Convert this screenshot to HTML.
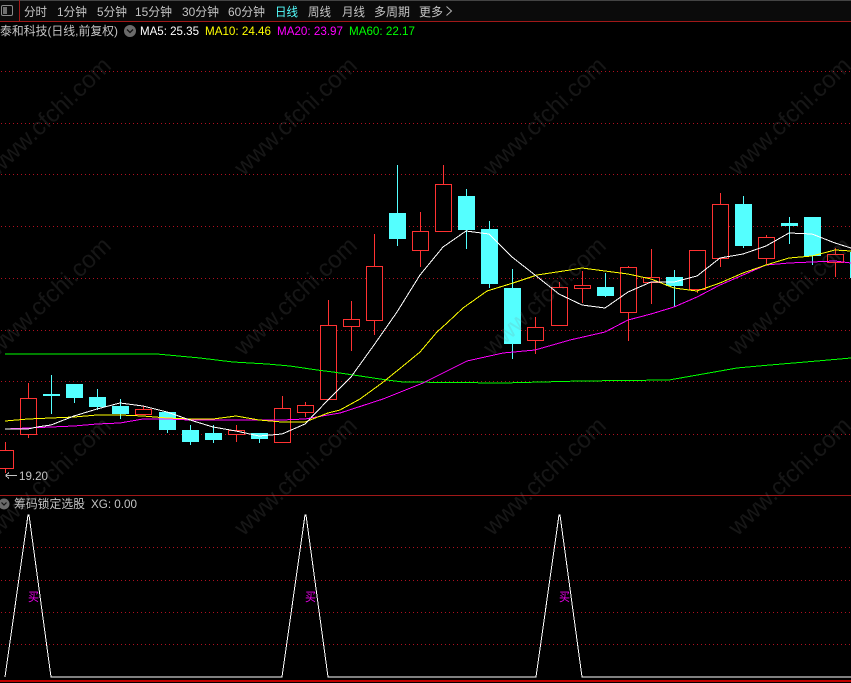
<!DOCTYPE html>
<html lang="zh">
<head>
<meta charset="utf-8">
<title>泰和科技</title>
<style>
html,body{margin:0;padding:0;background:#000;width:851px;height:683px;overflow:hidden}
svg{display:block;position:absolute;left:0;top:0}
text{font-family:"Liberation Sans","Noto Sans CJK SC",sans-serif;font-size:12px}
</style>
</head>
<body>
<svg width="851" height="683" viewBox="0 0 851 683" xmlns="http://www.w3.org/2000/svg">
<rect width="851" height="683" fill="#000"/>

<!-- toolbar -->
<rect x="0" y="0" width="851" height="21" fill="#0b0b0b"/>
<rect x="0" y="0" width="851" height="1" fill="#444"/>
<rect x="0" y="21" width="851" height="1" fill="#a01818"/>
<rect x="19" y="0" width="1" height="21" fill="#a01818"/>
<rect x="1.5" y="5.5" width="11" height="10" rx="1.5" fill="none" stroke="#8a8a8a"/>
<rect x="3" y="7" width="4" height="7" fill="#6e6e6e"/>
<g fill="#c4c4c4">
<text x="24" y="16" textLength="23" lengthAdjust="spacingAndGlyphs">分时</text>
<text x="57" y="16" textLength="30" lengthAdjust="spacingAndGlyphs">1分钟</text>
<text x="97" y="16" textLength="30" lengthAdjust="spacingAndGlyphs">5分钟</text>
<text x="135" y="16" textLength="37" lengthAdjust="spacingAndGlyphs">15分钟</text>
<text x="182" y="16" textLength="37" lengthAdjust="spacingAndGlyphs">30分钟</text>
<text x="228" y="16" textLength="37" lengthAdjust="spacingAndGlyphs">60分钟</text>
<text x="275" y="16" textLength="23" lengthAdjust="spacingAndGlyphs" fill="#54ffff">日线</text>
<text x="308" y="16" textLength="23" lengthAdjust="spacingAndGlyphs">周线</text>
<text x="342" y="16" textLength="23" lengthAdjust="spacingAndGlyphs">月线</text>
<text x="374" y="16" textLength="36" lengthAdjust="spacingAndGlyphs">多周期</text>
<text x="419" y="16" textLength="24" lengthAdjust="spacingAndGlyphs">更多</text>
</g>
<path d="M446.5 6.5L451.5 11L446.5 15.5" fill="none" stroke="#b4b4b4"/>

<!-- info row -->
<text x="0" y="35" textLength="118" lengthAdjust="spacingAndGlyphs" fill="#c4c4c4">泰和科技(日线,前复权)</text>
<circle cx="130" cy="31" r="6" fill="#6a6a6a"/>
<path d="M127 29.5L130 32.5L133 29.5" fill="none" stroke="#111" stroke-width="1.3"/>
<text x="140" y="35" textLength="59" lengthAdjust="spacingAndGlyphs" fill="#fff">MA5: 25.35</text>
<text x="205" y="35" textLength="66" lengthAdjust="spacingAndGlyphs" fill="#ff0">MA10: 24.46</text>
<text x="277" y="35" textLength="66" lengthAdjust="spacingAndGlyphs" fill="#f0f">MA20: 23.97</text>
<text x="349" y="35" textLength="66" lengthAdjust="spacingAndGlyphs" fill="#0f0">MA60: 22.17</text>

<!-- grid -->
<path d="M1 71.5H851M1 123.5H851M1 174.5H851M1 226.5H851M1 278.5H851M1 330.5H851M1 381.5H851M1 434.5H851M1 547.5H851M1 580.5H851M1 612.5H851M1 644.5H851" stroke="#b01020" stroke-dasharray="1 3" fill="none" shape-rendering="crispEdges"/>

<!-- red candles -->
<g shape-rendering="crispEdges">
<path stroke="#ff3232" fill="none" d="M5.5 442V473M28.5 383V438M143.5 406V415M236.5 425V442M282.5 396V442M305.5 402V417M328.5 300V399M351.5 301V351M374.5 234V335M420.5 212V267M443.5 165V231M535.5 317V354M559.5 282V325M582.5 271V303M628.5 266V341M651.5 249V304M697.5 250V293M720.5 193V267M766.5 235V264M835.5 248V277"/>
<path fill="#ff3232" d="M-3 450h17v19h-17zM20 398h17v37h-17zM135 409h17v6h-17zM228 430h17v5h-17zM274 408h17v35h-17zM297 405h17v8h-17zM320 325h17v75h-17zM343 319h17v8h-17zM366 266h17v55h-17zM412 231h17v20h-17zM435 184h17v48h-17zM527 327h17v14h-17zM551 287h17v39h-17zM574 285h17v4h-17zM620 267h17v46h-17zM643 277h17v6h-17zM689 250h17v40h-17zM712 204h17v55h-17zM758 237h17v22h-17zM827 254h17v9h-17z"/>
<path fill="#000" d="M-2 451h15v17h-15zM21 399h15v35h-15zM136 410h15v4h-15zM229 431h15v3h-15zM275 409h15v33h-15zM298 406h15v6h-15zM321 326h15v73h-15zM344 320h15v6h-15zM367 267h15v53h-15zM413 232h15v18h-15zM436 185h15v46h-15zM528 328h15v12h-15zM552 288h15v37h-15zM575 286h15v2h-15zM621 268h15v44h-15zM644 278h15v4h-15zM690 251h15v38h-15zM713 205h15v53h-15zM759 238h15v20h-15zM828 255h15v7h-15z"/>
</g>

<!-- cyan candles -->
<g shape-rendering="crispEdges">
<path d="M51.5 375V414M74.5 384V403M97.5 389V410M120.5 399V419M167.5 412V433M190.5 425V445M213.5 425V443M259.5 433V443M397.5 165V246M466.5 189V249M489.5 221V288M512.5 269V359M605.5 273V297M674.5 270V307M743.5 196V248M789.5 217V244M812.5 217V265" stroke="#54ffff" fill="none"/>
<path fill="#54ffff" d="M43 394h17v2h-17zM66 384h17v14h-17zM89 397h17v10h-17zM112 406h17v8h-17zM159 412h17v18h-17zM182 430h17v12h-17zM205 433h17v7h-17zM251 433h17v6h-17zM389 213h17v26h-17zM458 196h17v34h-17zM481 229h17v55h-17zM504 288h17v56h-17zM597 287h17v9h-17zM666 277h17v9h-17zM735 204h17v42h-17zM781 223h17v3h-17zM804 217h17v39h-17zM850 252h1v26h-1z"/>
</g>

<!-- moving averages -->
<g fill="none" stroke-width="1" shape-rendering="crispEdges">
<polyline stroke="#00ff00" points="5,354 40,354 157,354 200,358 233,362 267,364 290,366 317,370 333,372 360,376 387,380 403,382 503,383 580,381 669,380 703,374 737,368 770,365 817,361 851,358"/>
<polyline stroke="#ff00ff" points="5,429 28,428 51,427 74,426 97,424 120,423 143,419 167,419 190,420 213,420 236,420 259,420 282,420 305,419 328,415 340,413 383,399 423,383 467,361 503,353 535,350 570,340 605,332 628,320 651,314 674,307 697,297 720,285 743,275 766,265 789,263 812,262 835,261 851,263"/>
<polyline stroke="#ffff00" points="5,421 28,419 51,418 74,417 97,415 120,415 143,416 167,418 190,419 213,419 236,416 259,420 282,422 305,422 328,413 340,410 360,399 382,383 403,366 420,352 437,332 447,323 463,308 487,291 513,283 537,275 570,270 582,268 605,271 628,274 651,279 674,288 697,291 720,283 743,273 766,265 789,258 812,256 835,250 851,251"/>
<polyline stroke="#ffffff" points="5,429 28,429 37,427 51,425 74,416 97,409 120,403 143,406 167,412 190,420 213,427 236,431 259,436 282,434 305,424 328,400 351,377 374,345 397,312 420,275 443,247 466,231 489,234 512,257 535,275 559,294 582,305 605,308 628,292 651,282 674,282 697,276 720,258 743,254 766,246 789,233 812,234 835,243 851,248"/>
</g>

<!-- last price label -->
<path d="M5.5 475.5H17M5.5 475.5L9 472.5M5.5 475.5L9 478.5" stroke="#c4c4c4" fill="none" shape-rendering="crispEdges"/>
<text x="19" y="480" textLength="29" lengthAdjust="spacingAndGlyphs" fill="#c4c4c4">19.20</text>

<!-- sub panel -->
<rect x="0" y="495" width="851" height="1" fill="#a01818"/>
<circle cx="4" cy="504" r="5.5" fill="#6a6a6a"/>
<path d="M1.5 502.5L4 505L6.5 502.5" fill="none" stroke="#111" stroke-width="1.2"/>
<text x="14" y="508" textLength="71" lengthAdjust="spacingAndGlyphs" fill="#c4c4c4">筹码锁定选股</text>
<text x="91" y="508" textLength="46" lengthAdjust="spacingAndGlyphs" fill="#c4c4c4">XG: 0.00</text>

<polyline fill="none" stroke="#fff" stroke-width="1" shape-rendering="crispEdges" points="5,677 28,515 29,515 51,677 282,677 305,515 306,515 328,677 536,677 559,515 560,515 582,677 851,677"/>
<rect x="0" y="680" width="851" height="2" fill="#c00000"/>

<text x="28" y="601" textLength="11" lengthAdjust="spacingAndGlyphs" fill="#f000f0" style="font-family:'WenQuanYi Zen Hei','Noto Sans CJK SC',sans-serif">买</text>
<text x="305" y="601" textLength="11" lengthAdjust="spacingAndGlyphs" fill="#f000f0" style="font-family:'WenQuanYi Zen Hei','Noto Sans CJK SC',sans-serif">买</text>
<text x="559" y="601" textLength="11" lengthAdjust="spacingAndGlyphs" fill="#f000f0" style="font-family:'WenQuanYi Zen Hei','Noto Sans CJK SC',sans-serif">买</text>

<!-- watermark -->
<g fill="#808080" fill-opacity="0.17" text-anchor="middle">
<text transform="translate(55 122) rotate(-43.5)" style="font-size:24px">www.cfchi.com</text>
<text transform="translate(301 122) rotate(-43.5)" style="font-size:24px">www.cfchi.com</text>
<text transform="translate(550 122) rotate(-43.5)" style="font-size:24px">www.cfchi.com</text>
<text transform="translate(795 122) rotate(-43.5)" style="font-size:24px">www.cfchi.com</text>
<text transform="translate(55 302) rotate(-43.5)" style="font-size:24px">www.cfchi.com</text>
<text transform="translate(301 302) rotate(-43.5)" style="font-size:24px">www.cfchi.com</text>
<text transform="translate(550 302) rotate(-43.5)" style="font-size:24px">www.cfchi.com</text>
<text transform="translate(795 302) rotate(-43.5)" style="font-size:24px">www.cfchi.com</text>
<text transform="translate(55 482) rotate(-43.5)" style="font-size:24px">www.cfchi.com</text>
<text transform="translate(301 482) rotate(-43.5)" style="font-size:24px">www.cfchi.com</text>
<text transform="translate(550 482) rotate(-43.5)" style="font-size:24px">www.cfchi.com</text>
<text transform="translate(795 482) rotate(-43.5)" style="font-size:24px">www.cfchi.com</text>
</g>
</svg>
</body>
</html>
